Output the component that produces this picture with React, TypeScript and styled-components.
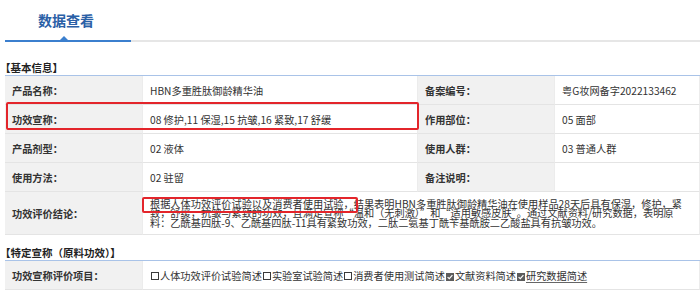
import styled, { createGlobalStyle } from "styled-components";

const GlobalStyle = createGlobalStyle`
  html, body {
    margin: 0;
    padding: 0;
    background: #fff;
  }
  body {
    font-family: "Noto Sans CJK SC", "Noto Sans", sans-serif;
    font-size: 10.2px;
    color: #333;
  }
`;

const Page = styled.div`
  position: relative;
  width: 700px;
  height: 294px;
  overflow: hidden;
  padding-left: 5px;
  box-sizing: border-box;
`;

const TabBar = styled.div`
  display: flex;
  height: 42px;
  border-bottom: 2px solid #e6e6e6;
  box-sizing: border-box;
`;

const TabTitle = styled.div`
  position: relative;
  width: 126px;
  display: flex;
  align-items: center;
  padding-left: 33px;
  box-sizing: border-box;
  margin-bottom: -2px;
  border-bottom: 2px solid #3b7fce;
  font-size: 14px;
  font-weight: 700;
  color: #2a60a6;

  &::after {
    content: "";
    position: absolute;
    left: 55px;
    bottom: 0;
    border-left: 4px solid transparent;
    border-right: 4px solid transparent;
    border-bottom: 4px solid #3b7fce;
  }
`;

const SectionTitle = styled.div<{ $gap: number }>`
  margin-top: ${(p) => p.$gap}px;
  padding-top: 4px;
  line-height: 14px;
  font-size: 10.5px;
  font-weight: 700;
  color: #222;
  text-indent: -5px;
  border-bottom: 1px solid #a9c3e8;
`;

const InfoGrid = styled.div`
  display: grid;
  grid-template-columns: 138px 275px 137px 145px;
`;

const Label = styled.div<{ $h?: number }>`
  display: flex;
  align-items: center;
  height: ${(p) => p.$h ?? 28}px;
  padding-left: 7px;
  background: #f1f1f1;
  font-weight: 700;
  color: #333;
  border-bottom: 1px solid #e4e4e4;
  border-right: 1px solid #ececec;
`;

const Value = styled.div<{ $h?: number; $span?: number }>`
  display: flex;
  align-items: center;
  height: ${(p) => p.$h ?? 28}px;
  padding-left: 7px;
  grid-column: span ${(p) => p.$span ?? 1};
  background: #fff;
  color: #333;
  border-bottom: 1px solid #e4e4e4;
  border-right: 1px solid #ececec;
  white-space: nowrap;
  overflow: hidden;
`;

const Conclusion = styled.div`
  display: flex;
  flex-direction: column;
  line-height: 9.5px;
`;

const Line = styled.span`
  white-space: nowrap;
`;

const Checks = styled.div`
  display: flex;
  align-items: center;
  white-space: nowrap;
`;

const Box = styled.span<{ $checked?: boolean }>`
  display: inline-flex;
  align-items: center;
  justify-content: center;
  width: 8px;
  height: 8px;
  margin: 2px 1px 0 1px;
  box-sizing: border-box;
  border: 1px solid ${(p) => (p.$checked ? "#5c5c5c" : "#3a3a3a")};
  background: ${(p) => (p.$checked ? "#5c5c5c" : "#fff")};
`;

const Item = styled.span<{ $underline?: boolean }>`
  text-decoration: ${(p) => (p.$underline ? "underline" : "none")};
  text-decoration-color: #666;
  text-underline-offset: 2px;
`;

const Annotation = styled.div`
  position: absolute;
  border: 2px solid #e3252b;
  border-radius: 2px;
  box-sizing: border-box;
  pointer-events: none;
`;

const Tick = () => (
  <svg width="6" height="6" viewBox="0 0 6 6">
    <path d="M0.6 3.1 L2.3 4.7 L5.4 1.2" fill="none" stroke="#fff" strokeWidth="1.2" />
  </svg>
);

const claims: { text: string; checked: boolean }[] = [
  { text: "人体功效评价试验简述", checked: false },
  { text: "实验室试验简述", checked: false },
  { text: "消费者使用测试简述", checked: false },
  { text: "文献资料简述", checked: true },
  { text: "研究数据简述", checked: true },
];

const conclusionLines = [
  "根据人体功效评价试验以及消费者使用试验，结果表明HBN多重胜肽御龄精华油在使用样品28天后具有保湿，修护，紧",
  "致，舒缓，抗皱与紧致的功效，且满足宣称“温和（无刺激）”和“适用敏感皮肤”。通过文献资料/研究数据，表明原",
  "料：乙酰基四肽-9、乙酰基四肽-11具有紧致功效，二肽二氨基丁酰苄基酰胺二乙酸盐具有抗皱功效。",
];

export default function App() {
  return (
    <Page>
      <GlobalStyle />
      <TabBar>
        <TabTitle>数据查看</TabTitle>
      </TabBar>

      <SectionTitle $gap={15}>【基本信息】</SectionTitle>
      <InfoGrid>
        <Label>产品名称：</Label>
        <Value>HBN多重胜肽御龄精华油</Value>
        <Label>备案编号：</Label>
        <Value>粤G妆网备字2022133462</Value>

        <Label>功效宣称：</Label>
        <Value>08 修护,11 保湿,15 抗皱,16 紧致,17 舒缓</Value>
        <Label>作用部位：</Label>
        <Value>05 面部</Value>

        <Label>产品剂型：</Label>
        <Value>02 液体</Value>
        <Label>使用人群：</Label>
        <Value>03 普通人群</Value>

        <Label>使用方法：</Label>
        <Value>02 驻留</Value>
        <Label>备注说明：</Label>
        <Value></Value>

        <Label $h={42}>功效评价结论：</Label>
        <Value $h={42} $span={3}>
          <Conclusion>
            {conclusionLines.map((l) => (
              <Line key={l}>{l}</Line>
            ))}
          </Conclusion>
        </Value>
      </InfoGrid>

      <SectionTitle $gap={7}>【特定宣称（原料功效）】</SectionTitle>
      <InfoGrid>
        <Label>功效宣称评价项目：</Label>
        <Value $span={3}>
          <Checks>
            {claims.map((c, i) => (
              <span key={c.text}>
                <Box $checked={c.checked}>{c.checked && <Tick />}</Box>
                <Item $underline={i === claims.length - 1}>{c.text}</Item>
              </span>
            ))}
          </Checks>
        </Value>
      </InfoGrid>

      <Annotation style={{ left: 6, top: 102, width: 413, height: 28 }} />
      <Annotation style={{ left: 142, top: 197, width: 216, height: 16 }} />
    </Page>
  );
}
